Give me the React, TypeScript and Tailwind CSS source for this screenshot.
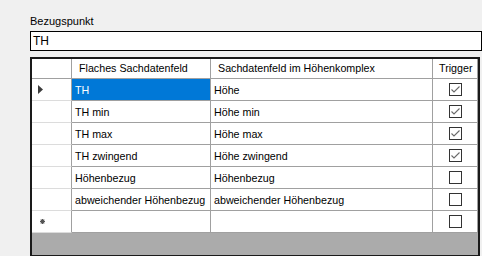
const rows = [
  { flat: "TH", complex: "Höhe", trigger: true },
  { flat: "TH min", complex: "Höhe min", trigger: true },
  { flat: "TH max", complex: "Höhe max", trigger: true },
  { flat: "TH zwingend", complex: "Höhe zwingend", trigger: true },
  { flat: "Höhenbezug", complex: "Höhenbezug", trigger: false },
  { flat: "abweichender Höhenbezug", complex: "abweichender Höhenbezug", trigger: false },
];

function CheckBox({ checked }: { checked: boolean }) {
  return (
    <svg width="13" height="13" viewBox="0 0 13 13">
      <rect x="0.5" y="0.5" width="12" height="12" fill="#fff" stroke="#333" />
      {checked && <path d="M2.5 6.5 L5 9 L10.5 3.5" fill="none" stroke="#6a6a6a" strokeWidth="1.1" />}
    </svg>
  );
}

export default function App() {
  return (
    <div
      className="w-[482px] h-[256px] overflow-hidden bg-[#f0f0f0] pl-[30px] pt-[15px] text-black"
      style={{ fontFamily: '"Liberation Sans", Arial, sans-serif' }}
    >
      <div className="h-[13px] text-[11px] leading-[13px]">Bezugspunkt</div>
      <div className="mt-[3px] h-[20px] w-[452px] border border-black bg-white pl-[2px] text-[12px] leading-[18px]">
        TH
      </div>

      <div className="mt-[6px] w-[450px] border-2 border-[#1a1a1a] bg-[#ababab] h-[200px] text-[10.7px] whitespace-nowrap">
        {/* header */}
        <div className="flex h-[20px] bg-white border-b border-[#a0a0a0]">
          <div className="w-[40px] border-r border-[#a0a0a0]" />
          <div className="w-[139px] border-r border-[#a0a0a0] pl-[7px] flex items-center">Flaches Sachdatenfeld</div>
          <div className="w-[222px] border-r border-[#a0a0a0] pl-[7px] flex items-center">Sachdatenfeld im Höhenkomplex</div>
          <div className="w-[45px] border-r border-[#a0a0a0] pl-[6px] flex items-center">Trigger</div>
        </div>

        {rows.map((r, i) => (
          <div key={r.flat} className="flex h-[22px] bg-white">
            <div className="w-[40px] border-r border-[#a0a0a0] border-b border-b-[#dcdcdc] flex items-center pl-[6px]">
              {i === 0 && (
                <svg width="5" height="9" viewBox="0 0 5 9">
                  <path d="M0 0 L5 4.5 L0 9 Z" fill="#3c3c3c" />
                </svg>
              )}
            </div>
            <div
              className={`w-[139px] border-r border-b border-[#a0a0a0] pl-[3px] pt-[1px] flex items-center overflow-hidden ${
                i === 0 ? "bg-[#0078d7] text-white" : ""
              }`}
            >
              {r.flat}
            </div>
            <div className="w-[222px] border-r border-b border-[#a0a0a0] pl-[3px] pt-[1px] flex items-center">
              {r.complex}
            </div>
            <div className="w-[45px] border-r border-b border-[#a0a0a0] flex items-center justify-center pl-[1px]">
              <CheckBox checked={r.trigger} />
            </div>
          </div>
        ))}

        {/* new row */}
        <div className="flex h-[22px] bg-white">
          <div className="w-[40px] border-r border-[#a0a0a0] border-b border-b-[#dcdcdc] flex items-center pl-[8px]">
            <svg width="5" height="5" viewBox="0 0 5 5">
              <path d="M2.5 0 V5 M0 2.5 H5 M0.7 0.7 L4.3 4.3 M4.3 0.7 L0.7 4.3" stroke="#555" strokeWidth="1.2" />
            </svg>
          </div>
          <div className="w-[139px] border-r border-b border-[#a0a0a0]" />
          <div className="w-[222px] border-r border-b border-[#a0a0a0]" />
          <div className="w-[45px] border-r border-b border-[#a0a0a0] flex items-center justify-center pl-[1px]">
            <CheckBox checked={false} />
          </div>
        </div>
      </div>
    </div>
  );
}
